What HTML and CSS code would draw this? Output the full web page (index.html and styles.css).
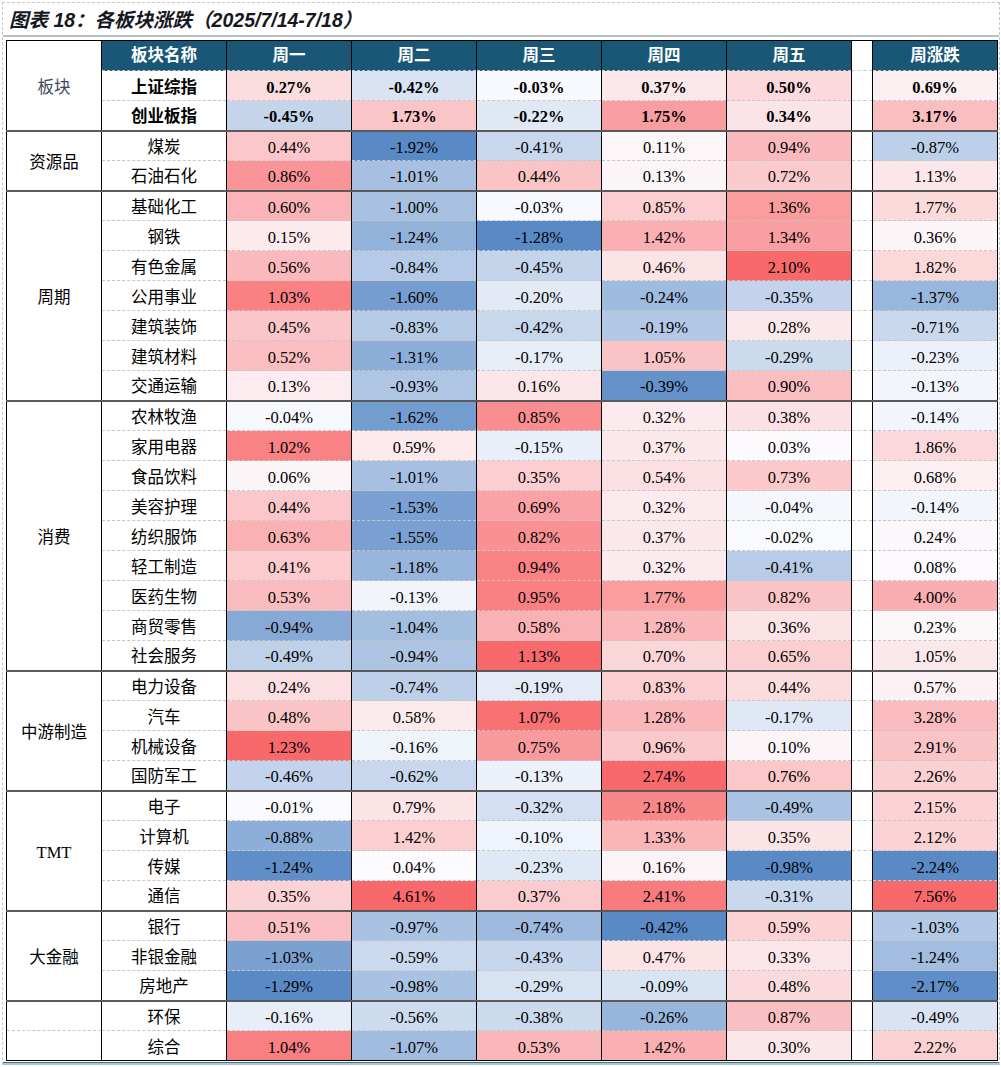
FILE: index.html
```html
<!DOCTYPE html>
<html lang="zh-CN">
<head>
<meta charset="utf-8">
<title>各板块涨跌</title>
<link rel="stylesheet" href="styles.css">
</head>
<body>
<div class="figure">
  <div class="title">图表 18：各板块涨跌（2025/7/14-7/18）</div>
  <div class="rule"></div>
  <table class="board">
    <colgroup>
      <col class="c-grp"><col class="c-name"><col class="c-day"><col class="c-day"><col class="c-day"><col class="c-day"><col class="c-day"><col class="c-gap"><col class="c-day">
    </colgroup>
    <tbody>
      <tr class="head">
        <th class="grp blk" rowspan="3">板块</th>
        <th class="hd">板块名称</th><th class="hd">周一</th><th class="hd">周二</th><th class="hd">周三</th><th class="hd">周四</th><th class="hd">周五</th><th class="gap"></th><th class="hd">周涨跌</th>
      </tr>
      <tr class="idx"><td class="name">上证综指</td><td class="v d1">0.27%</td><td class="v d2">-0.42%</td><td class="v d3">-0.03%</td><td class="v d4">0.37%</td><td class="v d5">0.50%</td><td class="gap"></td><td class="v d6">0.69%</td></tr>
      <tr class="idx"><td class="name">创业板指</td><td class="v d1">-0.45%</td><td class="v d2">1.73%</td><td class="v d3">-0.22%</td><td class="v d4">1.75%</td><td class="v d5">0.34%</td><td class="gap"></td><td class="v d6">3.17%</td></tr>

      <tr class="gs"><td class="grp" rowspan="2">资源品</td><td class="name">煤炭</td><td class="v d1">0.44%</td><td class="v d2">-1.92%</td><td class="v d3">-0.41%</td><td class="v d4">0.11%</td><td class="v d5">0.94%</td><td class="gap"></td><td class="v d6">-0.87%</td></tr>
      <tr><td class="name">石油石化</td><td class="v d1">0.86%</td><td class="v d2">-1.01%</td><td class="v d3">0.44%</td><td class="v d4">0.13%</td><td class="v d5">0.72%</td><td class="gap"></td><td class="v d6">1.13%</td></tr>

      <tr class="gs"><td class="grp" rowspan="7">周期</td><td class="name">基础化工</td><td class="v d1">0.60%</td><td class="v d2">-1.00%</td><td class="v d3">-0.03%</td><td class="v d4">0.85%</td><td class="v d5">1.36%</td><td class="gap"></td><td class="v d6">1.77%</td></tr>
      <tr><td class="name">钢铁</td><td class="v d1">0.15%</td><td class="v d2">-1.24%</td><td class="v d3">-1.28%</td><td class="v d4">1.42%</td><td class="v d5">1.34%</td><td class="gap"></td><td class="v d6">0.36%</td></tr>
      <tr><td class="name">有色金属</td><td class="v d1">0.56%</td><td class="v d2">-0.84%</td><td class="v d3">-0.45%</td><td class="v d4">0.46%</td><td class="v d5">2.10%</td><td class="gap"></td><td class="v d6">1.82%</td></tr>
      <tr><td class="name">公用事业</td><td class="v d1">1.03%</td><td class="v d2">-1.60%</td><td class="v d3">-0.20%</td><td class="v d4">-0.24%</td><td class="v d5">-0.35%</td><td class="gap"></td><td class="v d6">-1.37%</td></tr>
      <tr><td class="name">建筑装饰</td><td class="v d1">0.45%</td><td class="v d2">-0.83%</td><td class="v d3">-0.42%</td><td class="v d4">-0.19%</td><td class="v d5">0.28%</td><td class="gap"></td><td class="v d6">-0.71%</td></tr>
      <tr><td class="name">建筑材料</td><td class="v d1">0.52%</td><td class="v d2">-1.31%</td><td class="v d3">-0.17%</td><td class="v d4">1.05%</td><td class="v d5">-0.29%</td><td class="gap"></td><td class="v d6">-0.23%</td></tr>
      <tr><td class="name">交通运输</td><td class="v d1">0.13%</td><td class="v d2">-0.93%</td><td class="v d3">0.16%</td><td class="v d4">-0.39%</td><td class="v d5">0.90%</td><td class="gap"></td><td class="v d6">-0.13%</td></tr>

      <tr class="gs"><td class="grp" rowspan="9">消费</td><td class="name">农林牧渔</td><td class="v d1">-0.04%</td><td class="v d2">-1.62%</td><td class="v d3">0.85%</td><td class="v d4">0.32%</td><td class="v d5">0.38%</td><td class="gap"></td><td class="v d6">-0.14%</td></tr>
      <tr><td class="name">家用电器</td><td class="v d1">1.02%</td><td class="v d2">0.59%</td><td class="v d3">-0.15%</td><td class="v d4">0.37%</td><td class="v d5">0.03%</td><td class="gap"></td><td class="v d6">1.86%</td></tr>
      <tr><td class="name">食品饮料</td><td class="v d1">0.06%</td><td class="v d2">-1.01%</td><td class="v d3">0.35%</td><td class="v d4">0.54%</td><td class="v d5">0.73%</td><td class="gap"></td><td class="v d6">0.68%</td></tr>
      <tr><td class="name">美容护理</td><td class="v d1">0.44%</td><td class="v d2">-1.53%</td><td class="v d3">0.69%</td><td class="v d4">0.32%</td><td class="v d5">-0.04%</td><td class="gap"></td><td class="v d6">-0.14%</td></tr>
      <tr><td class="name">纺织服饰</td><td class="v d1">0.63%</td><td class="v d2">-1.55%</td><td class="v d3">0.82%</td><td class="v d4">0.37%</td><td class="v d5">-0.02%</td><td class="gap"></td><td class="v d6">0.24%</td></tr>
      <tr><td class="name">轻工制造</td><td class="v d1">0.41%</td><td class="v d2">-1.18%</td><td class="v d3">0.94%</td><td class="v d4">0.32%</td><td class="v d5">-0.41%</td><td class="gap"></td><td class="v d6">0.08%</td></tr>
      <tr><td class="name">医药生物</td><td class="v d1">0.53%</td><td class="v d2">-0.13%</td><td class="v d3">0.95%</td><td class="v d4">1.77%</td><td class="v d5">0.82%</td><td class="gap"></td><td class="v d6">4.00%</td></tr>
      <tr><td class="name">商贸零售</td><td class="v d1">-0.94%</td><td class="v d2">-1.04%</td><td class="v d3">0.58%</td><td class="v d4">1.28%</td><td class="v d5">0.36%</td><td class="gap"></td><td class="v d6">0.23%</td></tr>
      <tr><td class="name">社会服务</td><td class="v d1">-0.49%</td><td class="v d2">-0.94%</td><td class="v d3">1.13%</td><td class="v d4">0.70%</td><td class="v d5">0.65%</td><td class="gap"></td><td class="v d6">1.05%</td></tr>

      <tr class="gs"><td class="grp" rowspan="4">中游制造</td><td class="name">电力设备</td><td class="v d1">0.24%</td><td class="v d2">-0.74%</td><td class="v d3">-0.19%</td><td class="v d4">0.83%</td><td class="v d5">0.44%</td><td class="gap"></td><td class="v d6">0.57%</td></tr>
      <tr><td class="name">汽车</td><td class="v d1">0.48%</td><td class="v d2">0.58%</td><td class="v d3">1.07%</td><td class="v d4">1.28%</td><td class="v d5">-0.17%</td><td class="gap"></td><td class="v d6">3.28%</td></tr>
      <tr><td class="name">机械设备</td><td class="v d1">1.23%</td><td class="v d2">-0.16%</td><td class="v d3">0.75%</td><td class="v d4">0.96%</td><td class="v d5">0.10%</td><td class="gap"></td><td class="v d6">2.91%</td></tr>
      <tr><td class="name">国防军工</td><td class="v d1">-0.46%</td><td class="v d2">-0.62%</td><td class="v d3">-0.13%</td><td class="v d4">2.74%</td><td class="v d5">0.76%</td><td class="gap"></td><td class="v d6">2.26%</td></tr>

      <tr class="gs"><td class="grp" rowspan="4">TMT</td><td class="name">电子</td><td class="v d1">-0.01%</td><td class="v d2">0.79%</td><td class="v d3">-0.32%</td><td class="v d4">2.18%</td><td class="v d5">-0.49%</td><td class="gap"></td><td class="v d6">2.15%</td></tr>
      <tr><td class="name">计算机</td><td class="v d1">-0.88%</td><td class="v d2">1.42%</td><td class="v d3">-0.10%</td><td class="v d4">1.33%</td><td class="v d5">0.35%</td><td class="gap"></td><td class="v d6">2.12%</td></tr>
      <tr><td class="name">传媒</td><td class="v d1">-1.24%</td><td class="v d2">0.04%</td><td class="v d3">-0.23%</td><td class="v d4">0.16%</td><td class="v d5">-0.98%</td><td class="gap"></td><td class="v d6">-2.24%</td></tr>
      <tr><td class="name">通信</td><td class="v d1">0.35%</td><td class="v d2">4.61%</td><td class="v d3">0.37%</td><td class="v d4">2.41%</td><td class="v d5">-0.31%</td><td class="gap"></td><td class="v d6">7.56%</td></tr>

      <tr class="gs"><td class="grp" rowspan="3">大金融</td><td class="name">银行</td><td class="v d1">0.51%</td><td class="v d2">-0.97%</td><td class="v d3">-0.74%</td><td class="v d4">-0.42%</td><td class="v d5">0.59%</td><td class="gap"></td><td class="v d6">-1.03%</td></tr>
      <tr><td class="name">非银金融</td><td class="v d1">-1.03%</td><td class="v d2">-0.59%</td><td class="v d3">-0.43%</td><td class="v d4">0.47%</td><td class="v d5">0.33%</td><td class="gap"></td><td class="v d6">-1.24%</td></tr>
      <tr><td class="name">房地产</td><td class="v d1">-1.29%</td><td class="v d2">-0.98%</td><td class="v d3">-0.29%</td><td class="v d4">-0.09%</td><td class="v d5">0.48%</td><td class="gap"></td><td class="v d6">-2.17%</td></tr>

      <tr class="gs"><td class="grp"></td><td class="name">环保</td><td class="v d1">-0.16%</td><td class="v d2">-0.56%</td><td class="v d3">-0.38%</td><td class="v d4">-0.26%</td><td class="v d5">0.87%</td><td class="gap"></td><td class="v d6">-0.49%</td></tr>
      <tr><td class="grp"></td><td class="name">综合</td><td class="v d1">1.04%</td><td class="v d2">-1.07%</td><td class="v d3">0.53%</td><td class="v d4">1.42%</td><td class="v d5">0.30%</td><td class="gap"></td><td class="v d6">2.22%</td></tr>
    </tbody>
  </table>
  <div class="rule-bottom"></div>
</div>
<script src="script.js"></script>
</body>
</html>
```

FILE: styles.css
```css
* { box-sizing: border-box; }

body {
  margin: 0;
  background: #ffffff;
  color: #000000;
  font-family: "Liberation Serif", "Noto Sans CJK SC", serif;
}

.figure {
  margin: 2px 0 0 2px;
  width: 998px;
  padding-left: 3px;
  border-left: 1px dashed #c8c8c8;
  border-top: 1px dashed #c8c8c8;
  border-right: 1px dashed #c8c8c8;
}

.title {
  height: 32px;
  padding-left: 3px;
  padding-top: 1px;
  line-height: 32px;
  font-family: "Liberation Sans", "Noto Sans CJK SC", sans-serif;
  font-size: 19.5px;
  font-weight: bold;
  font-style: italic;
  color: #15181f;
  white-space: nowrap;
}

.rule {
  height: 2px;
  margin-left: -3px;
  background: #b6c0ca;
}

.board {
  margin-top: 3px;
  width: 992px;
  table-layout: fixed;
  border-collapse: collapse;
  border: 1px solid #000000;
  font-size: 16.5px;
}

.c-grp { width: 95px; }
.c-name { width: 125px; }
.c-day { width: 125px; }
.c-gap { width: 21px; }

.board tr { height: 30px; }

.board th,
.board td {
  padding: 0;
  text-align: center;
  vertical-align: middle;
  white-space: nowrap;
  border-left: 1px solid #000000;
  border-right: 1px solid #000000;
  border-top: 1px dashed #c6c6c6;
  border-bottom: 1px dashed #c6c6c6;
  line-height: 20px;
}

.board td { padding-top: 4px; }

.board .hd {
  background: #1a5777;
  color: #ffffff;
  font-weight: bold;
  font-size: 16.5px;
}

.board .blk {
  padding-top: 6px;
  font-weight: normal;
  font-size: 19px;
  color: #3f4862;
  background: #ffffff;
}

.board .gap { background: #ffffff; }

.board .grp { font-size: 16.5px; }

.board .idx td { font-weight: bold; }

.board .gs td {
  border-top: 2px solid #5a5a5a;
}

.board .head th { border-top: 1px solid #000000; }

.rule-bottom {
  height: 3px;
  margin-left: -3px;
  margin-top: 1px;
  border-top: 1px solid #45788c;
  background: #a9c8d4;
}
```

FILE: script.js
```js
(function () {
  var white = [252, 252, 255];
  var red = [248, 105, 107];
  var blue = [90, 138, 198];
  ["d1", "d2", "d3", "d4", "d5", "d6"].forEach(function (cls) {
    var cells = Array.prototype.slice.call(document.querySelectorAll("td." + cls));
    var vals = cells.map(function (td) { return parseFloat(td.textContent); });
    var max = Math.max.apply(null, vals);
    var min = Math.min.apply(null, vals);
    cells.forEach(function (td, i) {
      var v = vals[i];
      var target, t;
      if (v >= 0) { target = red; t = max > 0 ? v / max : 0; }
      else { target = blue; t = min < 0 ? v / min : 0; }
      var rgb = white.map(function (w, k) { return Math.round(w + (target[k] - w) * t); });
      td.style.backgroundColor = "rgb(" + rgb.join(",") + ")";
    });
  });
})();
```
